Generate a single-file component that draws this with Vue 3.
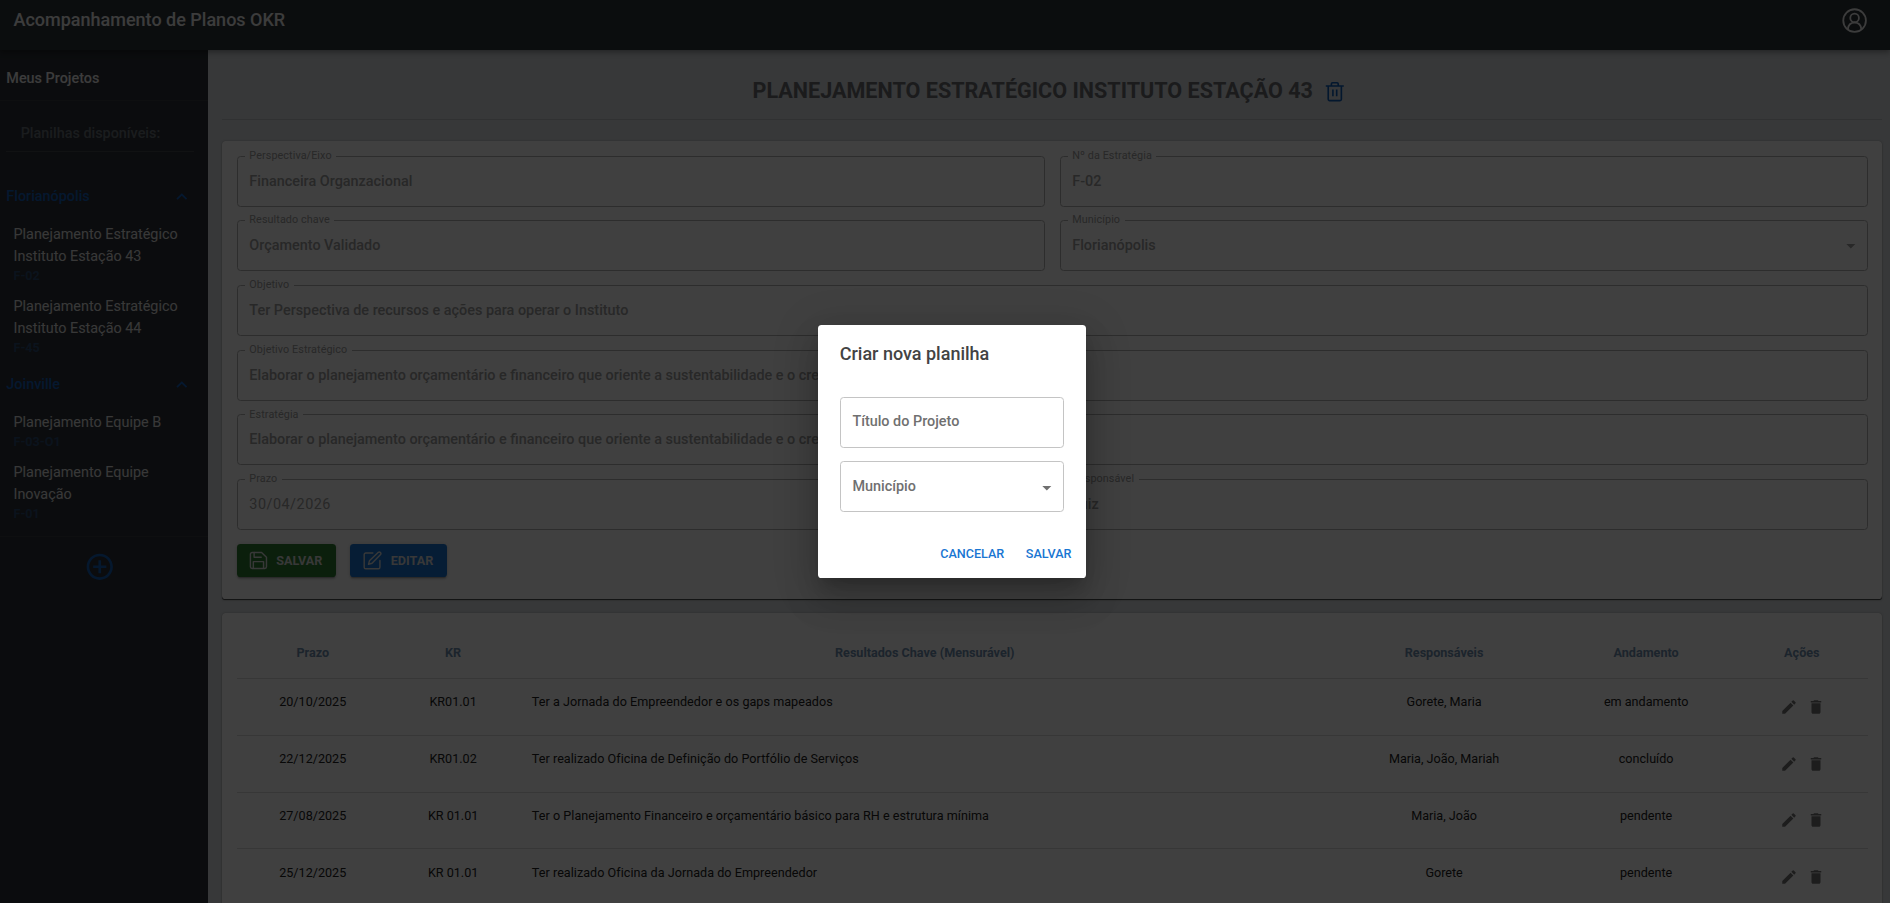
<script setup>
const groups = [
  {
    city: 'Florianópolis',
    plans: [
      { name: 'Planejamento Estratégico Instituto Estação 43', code: 'F-02' },
      { name: 'Planejamento Estratégico Instituto Estação 44', code: 'F-45' },
    ],
  },
  {
    city: 'Joinville',
    plans: [
      { name: 'Planejamento Equipe B', code: 'F-03-O1' },
      { name: 'Planejamento Equipe Inovação', code: 'F-01' },
    ],
  },
]

const strategy =
  'Elaborar o planejamento orçamentário e financeiro que oriente a sustentabilidade e o crescimento'

const fields = [
  { label: 'Perspectiva/Eixo', value: 'Financeira Organzacional' },
  { label: 'Nº da Estratégia', value: 'F-02' },
  { label: 'Resultado chave', value: 'Orçamento Validado' },
  { label: 'Município', value: 'Florianópolis', select: true },
  { label: 'Objetivo', value: 'Ter Perspectiva de recursos e ações para operar o Instituto', wide: true },
  { label: 'Objetivo Estratégico', value: strategy, wide: true },
  { label: 'Estratégia', value: strategy, wide: true },
  { label: 'Prazo', value: '30/04/2026', date: true },
  { label: 'Responsável', value: 'Luiz' },
]

const rows = [
  { date: '20/10/2025', kr: 'KR01.01', text: 'Ter a Jornada do Empreendedor e os gaps mapeados', who: 'Gorete, Maria', status: 'em andamento' },
  { date: '22/12/2025', kr: 'KR01.02', text: 'Ter realizado Oficina de Definição do Portfólio de Serviços', who: 'Maria, João, Mariah', status: 'concluído' },
  { date: '27/08/2025', kr: 'KR 01.01', text: 'Ter o Planejamento Financeiro e orçamentário básico para RH e estrutura mínima', who: 'Maria, João', status: 'pendente' },
  { date: '25/12/2025', kr: 'KR 01.01', text: 'Ter realizado Oficina da Jornada do Empreendedor', who: 'Gorete', status: 'pendente' },
]
</script>

<template>
  <div class="app">
    <header class="topbar">
      <h1 class="brand">Acompanhamento de Planos OKR</h1>
      <svg class="user" viewBox="0 0 28 28" fill="none" stroke="currentColor" stroke-width="2">
        <circle cx="14" cy="14" r="12.600" />
        <circle cx="14" cy="11" r="4.800" />
        <path d="M6.500 23.500C7 18.500 10 16.200 14 16.200S21 18.500 21.500 23.500" />
      </svg>
    </header>

    <div class="body">
      <aside class="sidebar">
        <div class="side-title">Meus Projetos</div>
        <div class="side-sub">Planilhas disponíveis:</div>
        <section v-for="g in groups" :key="g.city" class="group">
          <div class="city">
            <span>{{ g.city }}</span>
            <svg viewBox="0 0 24 24"><path d="m12 8-6 6 1.410 1.410L12 10.830l4.590 4.580L18 14z" fill="currentColor" /></svg>
          </div>
          <div v-for="p in g.plans" :key="p.name" class="plan">
            <div class="plan-name">{{ p.name }}</div>
            <div class="plan-code">{{ p.code }}</div>
          </div>
        </section>
        <div class="add">
          <svg viewBox="0 0 24 24" fill="currentColor">
            <path d="M13 7h-2v4H7v2h4v4h2v-4h4v-2h-4zm-1-5C6.480 2 2 6.480 2 12s4.480 10 10 10 10-4.480 10-10S17.520 2 12 2m0 18c-4.410 0-8-3.590-8-8s3.590-8 8-8 8 3.590 8 8-3.590 8-8 8" />
          </svg>
        </div>
      </aside>

      <main class="main">
        <div class="heading">
          <h2>Planejamento Estratégico Instituto Estação 43</h2>
          <svg viewBox="0 0 24 24" fill="none" stroke="currentColor" stroke-width="1.800" stroke-linejoin="round">
            <path d="M2 5.500h20M8.200 5.500V3.200a1.300 1.300 0 0 1 1.300-1.300h5a1.300 1.300 0 0 1 1.300 1.300v2.300M19.300 5.500V20.300a1.500 1.500 0 0 1-1.500 1.500H6.200a1.500 1.500 0 0 1-1.500-1.500V5.500M9.900 9.500v7.500M14.100 9.500v7.500" />
          </svg>
        </div>

        <section class="card">
          <div class="form">
            <fieldset v-for="f in fields" :key="f.label" class="field" :class="{ wide: f.wide }">
              <legend>{{ f.label }}</legend>
              <span class="value" :class="{ date: f.date }">{{ f.value }}</span>
              <svg v-if="f.select" class="caret" viewBox="0 0 24 24"><path d="m7 10 5 5 5-5z" fill="currentColor" /></svg>
            </fieldset>
          </div>
          <div class="buttons">
            <button class="btn green">
              <svg viewBox="0 0 24 24" fill="none" stroke="currentColor" stroke-width="1.8" stroke-linejoin="round" stroke-linecap="round">
                <path d="M16 1.800H4a2.200 2.200 0 0 0-2.200 2.200v16A2.200 2.200 0 0 0 4 22.200h16a2.200 2.200 0 0 0 2.200-2.200V8z" />
                <path d="M18.500 22v-8.500h-13V22M6.500 2v6h9" />
              </svg>
              SALVAR
            </button>
            <button class="btn blue">
              <svg viewBox="0 0 24 24" fill="none" stroke="currentColor" stroke-width="1.8" stroke-linejoin="round" stroke-linecap="round">
                <path d="M12.500 2.500H3.500a2 2 0 0 0-2 2v16a2 2 0 0 0 2 2h16a2 2 0 0 0 2-2V12" />
                <path d="M19.500 1.700a2 2 0 0 1 2.800 2.800L11.500 15.500l-4.500 1.300 1.200-4.300z" />
              </svg>
              EDITAR
            </button>
          </div>
        </section>

        <section class="card table-card">
          <table>
            <colgroup>
              <col class="c1" /><col class="c2" /><col class="c3" /><col class="c4" /><col class="c5" /><col class="c6" />
            </colgroup>
            <thead>
              <tr>
                <th>Prazo</th><th>KR</th><th>Resultados Chave (Mensurável)</th><th>Responsáveis</th><th>Andamento</th><th>Ações</th>
              </tr>
            </thead>
            <tbody>
              <tr v-for="r in rows" :key="r.text">
                <td>{{ r.date }}</td>
                <td>{{ r.kr }}</td>
                <td class="left">{{ r.text }}</td>
                <td>{{ r.who }}</td>
                <td>{{ r.status }}</td>
                <td>
                  <div class="actions">
                    <svg viewBox="0 0 24 24"><path d="M3 17.250V21h3.750L17.810 9.940l-3.750-3.750zM20.710 7.040c.39-.39.39-1.020 0-1.410l-2.340-2.340a.996.996 0 0 0-1.410 0l-1.830 1.830 3.750 3.750z" fill="currentColor" /></svg>
                    <svg viewBox="0 0 24 24"><path d="M6 19c0 1.100.9 2 2 2h8c1.100 0 2-.9 2-2V7H6zM19 4h-3.500l-1-1h-5l-1 1H5v2h14z" fill="currentColor" /></svg>
                  </div>
                </td>
              </tr>
            </tbody>
          </table>
        </section>
      </main>
    </div>

    <div class="overlay">
      <div class="dialog">
        <div class="dialog-title">Criar nova planilha</div>
        <div class="dialog-fields">
          <div class="input">Título do Projeto</div>
          <div class="input select">
            Município
            <svg class="caret" viewBox="0 0 24 24"><path d="m7 10 5 5 5-5z" fill="currentColor" /></svg>
          </div>
        </div>
        <div class="dialog-actions">
          <span>CANCELAR</span>
          <span>SALVAR</span>
        </div>
      </div>
    </div>
  </div>
</template>

<style>
html,
body {
  margin: 0;
  overflow: hidden;
}
</style>

<style scoped>
.app {
  zoom: 0.9;
  width: 2100px;
  height: 1003.33px;
  overflow: hidden;
  position: relative;
  display: flex;
  flex-direction: column;
  font-family: Roboto, "Noto Sans", sans-serif;
  font-size: 16px;
  line-height: 1.5;
  background: #d9dde1;
  color: #212121;
}
.app *,
.app {
  box-sizing: border-box;
}
h1,
h2 {
  margin: 0;
}
.topbar {
  height: 56px;
  flex: none;
  display: flex;
  align-items: flex-start;
  justify-content: space-between;
  padding: 9px 25px 0 15px;
  background: #2f3439;
  color: #eee;
  box-shadow: 0 2px 4px -1px rgba(0, 0, 0, 0.2), 0 4px 5px rgba(0, 0, 0, 0.14), 0 1px 10px rgba(0, 0, 0, 0.12);
  position: relative;
}
.brand {
  font-size: 20px;
  font-weight: 500;
  line-height: 26px;
}
.user {
  width: 28px;
  height: 28px;
}
.body {
  flex: 1;
  min-height: 0;
  display: flex;
}
.sidebar {
  width: 231px;
  flex: none;
  background: #2d3238;
  color: #e0e0e0;
}
.side-title {
  height: 56px;
  padding: 20px 7px 0;
  font-weight: 500;
  border-bottom: 1px solid #383c40;
  color: #eee;
}
.side-sub {
  margin: 16px 16px 0 7px;
  height: 41px;
  padding: 9px 16px;
  font-weight: 500;
  color: #6a7178;
  border-bottom: 2px solid #43474b;
}
.group {
  margin-top: 0.7px;
}
.side-sub + .group {
  margin-top: 26px;
}
.city {
  height: 48px;
  padding: 0 17px 0 7px;
  display: flex;
  align-items: center;
  justify-content: space-between;
  font-weight: 500;
  color: #1460bd;
}
.city svg {
  width: 24px;
  height: 24px;
}
.plan {
  padding: 6px 15px;
}
.plan-name {
  line-height: 24px;
}
.plan-code {
  font-size: 14px;
  font-weight: 700;
  line-height: 20px;
  color: #2f4c74;
}
.add {
  border-top: 1px solid #383c40;
  margin-top: 8px;
  padding: 16px 9px 0 0;
  display: flex;
  justify-content: center;
  color: #1460b8;
}
.add svg {
  width: 35px;
  height: 35px;
}
.main {
  flex: 1;
  min-width: 0;
  padding: 0 9px 0 16px;
}
.heading {
  height: 77px;
  display: flex;
  align-items: center;
  justify-content: center;
  gap: 12px;
  padding: 16px 7px 0 0;
  border-bottom: 1px solid #c0c4c8;
}
.heading h2 {
  font-size: 24px;
  font-weight: 700;
  line-height: 32px;
  text-transform: uppercase;
  color: #6b6e72;
}
.heading svg {
  width: 24px;
  height: 24px;
  color: #0d5cb6;
}
.card {
  margin-top: 24px;
  background: #fff;
  border-radius: 4px;
  padding: 10.5px 16px 24.5px;
  box-shadow: 0 2px 1px -1px rgba(0, 0, 0, 0.5), 0 1px 1px rgba(0, 0, 0, 0.3), 0 1px 3px rgba(0, 0, 0, 0.12);
}
.form {
  display: grid;
  grid-template-columns: 1fr 1fr;
  column-gap: 16.5px;
  row-gap: 9.9px;
}
.field {
  position: relative;
  min-width: 0;
  height: 62px;
  margin: 0;
  padding: 0 13px 0 8px;
  border: 1px solid #b2b2b2;
  border-radius: 4px;
  color: #9e9e9e;
}
.wide {
  grid-column: 1 / -1;
}
.field legend {
  font-size: 12px;
  letter-spacing: 0.1px;
  line-height: 12px;
  padding: 0 5px;
}
.value {
  display: block;
  padding: 10px 5px;
  font-weight: 500;
}
.date {
  font-weight: 400;
  letter-spacing: 0.55px;
}
.caret {
  width: 24px;
  height: 24px;
  position: absolute;
  right: 6px;
  top: 16px;
}
.field .caret {
  top: 10px;
}
.buttons {
  display: flex;
  gap: 16px;
  margin-top: 15.5px;
}
.btn {
  display: flex;
  align-items: center;
  gap: 9px;
  height: 36.5px;
  border: 0;
  border-radius: 4px;
  padding: 0 15px 0 14px;
  font: 700 14px/24px Roboto, sans-serif;
  color: #dedede;
  box-shadow: 0 3px 1px -2px rgba(0, 0, 0, 0.2), 0 2px 2px rgba(0, 0, 0, 0.14), 0 1px 5px rgba(0, 0, 0, 0.12);
}
.btn svg {
  width: 21px;
  height: 21px;
}
.green {
  background: #2e7d32;
}
.blue {
  gap: 10px;
  background: #1976d2;
}
.table-card {
  margin-top: 15.5px;
  height: 420px;
  padding-top: 16px;
}
table {
  width: 100%;
  table-layout: fixed;
  border-collapse: collapse;
  font-size: 14px;
}
.c1 { width: 169px; }
.c2 { width: 143px; }
.c4 { width: 249px; }
.c5 { width: 200px; }
.c6 { width: 146px; }
th {
  height: 57px;
  padding: 2px 0 0;
  font-weight: 700;
  color: #708fb0;
  border-bottom: 1px solid #dcdcdc;
}
td {
  height: 63px;
  padding: 16px;
  line-height: 20px;
  text-align: center;
  vertical-align: top;
  border-bottom: 1px solid #dcdcdc;
}
.left {
  text-align: left;
  letter-spacing: 0.035px;
}
.actions {
  height: 30px;
  margin-left: 2px;
  display: flex;
  align-items: center;
  justify-content: center;
  gap: 10px;
  color: #757575;
}
.actions svg {
  width: 20px;
  height: 20px;
}
.overlay {
  position: absolute;
  inset: 0;
  display: flex;
  align-items: center;
  justify-content: center;
  padding-left: 16px;
  background: rgba(0, 0, 0, 0.75);
}
.dialog {
  width: 298px;
  height: 281px;
  border-radius: 4px;
  background: #fff;
  color: #434343;
  box-shadow: 0 11px 15px -7px rgba(0, 0, 0, 0.2), 0 24px 38px 3px rgba(0, 0, 0, 0.14), 0 9px 46px 8px rgba(0, 0, 0, 0.12);
}
.dialog-title {
  padding: 17px 24px 15px;
  font-size: 20px;
  font-weight: 500;
  line-height: 32px;
}
.dialog-fields {
  padding: 16px 25px 16px 24px;
  display: grid;
  gap: 15px;
}
.input {
  position: relative;
  height: 56.5px;
  padding: 14px 13px;
  border: 1px solid #c4c4c4;
  border-radius: 4px;
  font-weight: 500;
  color: #707070;
}
.select {
  padding-top: 15px;
}
.dialog-actions {
  display: flex;
  justify-content: flex-end;
  gap: 24px;
  padding: 18px 16.5px 0 0;
  font-size: 14px;
  font-weight: 500;
  line-height: 24px;
  color: #1976d2;
}
</style>
